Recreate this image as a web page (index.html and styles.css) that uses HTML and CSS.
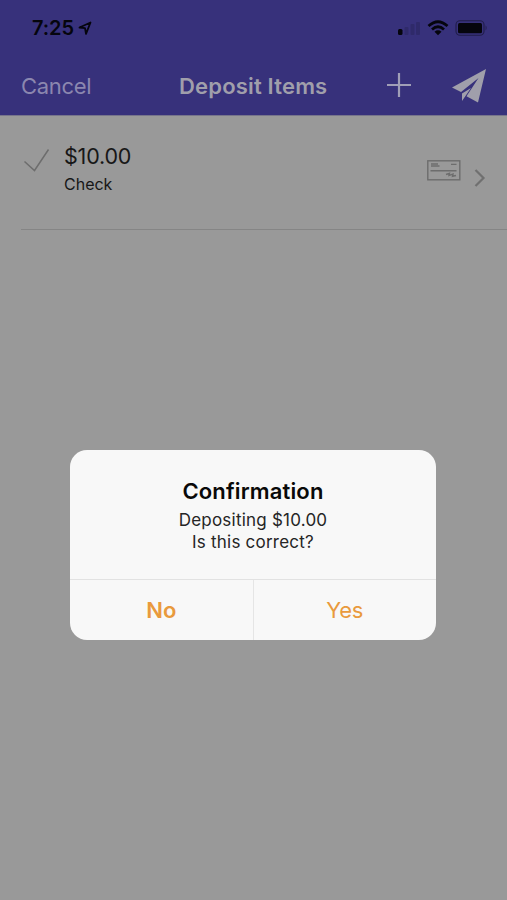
FILE: index.html
```html
<!DOCTYPE html>
<html lang="en">
<head>
<meta charset="utf-8">
<title>Deposit Items</title>
<link rel="stylesheet" href="styles.css">
</head>
<body>
<div class="screen">
  <header class="header">
    <div class="status">
      <span class="time">7:25</span>
      <svg class="location" width="14" height="15" viewBox="0 0 14 15"><path d="M1.5 6.5 12.5 1.5 8 12.8 7 7.2Z" fill="none" stroke="currentColor" stroke-width="1.8" stroke-linejoin="round"/></svg>
      <svg class="signal" width="24" height="16" viewBox="0 0 24 16"><rect x="1" y="9" width="4.5" height="6" rx="1.5"/><g opacity=".15"><rect x="7.5" y="7" width="4" height="8" rx="1"/><rect x="13.5" y="4" width="4" height="11" rx="1"/><rect x="19" y="2" width="4" height="13" rx="1"/></g></svg>
      <svg class="wifi" width="22" height="16" viewBox="0 0 22 16"><path d="M1.5 6Q11-2.5 20.5 6M5 9.5Q11 4 17 9.5" fill="none" stroke="currentColor" stroke-width="2.8"/><path d="M7.5 11.7Q11 8.8 14.5 11.7L11 15.2Z"/></svg>
      <svg class="battery" width="34" height="18" viewBox="0 0 34 18"><rect x="1" y="1.7" width="28" height="14.6" rx="4" fill="none" stroke="currentColor" stroke-width="1.1" opacity=".45"/><rect x="3" y="3.9" width="24" height="10.4" rx="1.5"/><path d="M30.5 6.3Q33 9 30.5 11.5Z" opacity=".35"/></svg>
    </div>
    <nav class="nav">
      <span class="cancel">Cancel</span>
      <h1 class="title">Deposit Items</h1>
      <svg class="plus" width="26" height="26" viewBox="0 0 26 26"><path d="M13 1V25M1 13H25" stroke="currentColor" stroke-width="2.2"/></svg>
      <svg class="send" width="36" height="36" viewBox="0 0 36 36"><path d="M35 1 1 19.5 10 24 27.5 10 15.5 28.3 27 34.5ZM11 25.5V33L20 20Z"/></svg>
    </nav>
  </header>
  <main class="list">
    <div class="item">
      <svg class="tick" width="28" height="26" viewBox="0 0 28 26"><path d="M1.5 13.5 11.5 22.5 25.5 1.5" fill="none" stroke="currentColor" stroke-width="1.5"/></svg>
      <div class="details"><div class="amount">$10.00</div><div class="kind">Check</div></div>
      <svg class="cheque" width="34" height="21" viewBox="0 0 34 21"><rect x=".8" y=".8" width="32" height="19" fill="none" stroke="currentColor" stroke-width="1.4"/><path d="M3.5 10.7H29.5M24 4.4H29.5M4 4H11M4 6H12.5" fill="none" stroke="currentColor" stroke-width="1.4"/><path d="M19 14.5 22.5 13.3 22 15.5 26 14 25.5 16.3 29 15.5" fill="none" stroke="currentColor" stroke-width="1.4"/></svg>
      <svg class="chevron" width="12" height="20" viewBox="0 0 12 20"><path d="M1.5 2 9.5 10 1.5 18" fill="none" stroke="currentColor" stroke-width="2.2"/></svg>
    </div>
  </main>
  <section class="dialog" role="alertdialog">
    <div class="message">
      <h2 class="heading">Confirmation</h2>
      <p class="line amount-line">Depositing $10.00</p>
      <p class="line">Is this correct?</p>
    </div>
    <div class="actions"><button class="action no">No</button><button class="action yes">Yes</button></div>
  </section>
</div>
</body>
</html>
```
FILE: styles.css
```css
* { box-sizing: border-box; }
body { margin: 0; font-family: Inter, "Liberation Sans", sans-serif; }
h1, h2, p { margin: 0; }
svg { display: block; flex: none; fill: currentColor; }
.screen { position: relative; width: 507px; height: 900px; background: #999; overflow: hidden; }
.header { height: 116px; background: #37317b; border-bottom: 1px solid #77758b; }
.status { display: flex; align-items: center; height: 56px; padding: 0 18px 0 32px; color: #05050d; }
.time { width: 42px; font-size: 20px; font-weight: 600; letter-spacing: -.1px; white-space: nowrap; }
.location { margin-left: 4px; }
.signal { margin-left: auto; }
.wifi { margin-left: 6px; }
.battery { margin-left: 6px; }
.nav { display: flex; align-items: center; height: 59px; padding: 0 20px 0 21px; color: #a09fab; }
.cancel { width: 158px; font-size: 22px; line-height: 28px; letter-spacing: -.3px; color: #8b87af; }
.title { width: 207px; font-size: 22px; line-height: 28px; font-weight: 600; letter-spacing: .18px; white-space: nowrap; }
.plus { margin-bottom: 2px; color: #a09fb7; }
.send { margin-left: auto; }
.item { display: flex; height: 114px; margin-left: 21px; padding-right: 21px; border-bottom: 1px solid #858585; }
.tick { margin: 32px 0 0 2px; color: #6d6d6d; }
.details { margin: 26px 0 0 13px; color: #171717; }
.amount { font-size: 21.5px; line-height: 28px; letter-spacing: -.2px; }
.kind { font-size: 16px; line-height: 28px; }
.cheque { margin: 44px 0 0 auto; color: #6d6d6d; }
.chevron { margin: 52px 0 0 13px; color: #707070; }
.dialog { position: absolute; left: 70px; top: 450px; width: 366px; height: 190px; display: flex; flex-direction: column; border-radius: 17px; background: #f8f8f8; overflow: hidden; text-align: center; }
.message { height: 129px; padding-top: 26px; }
.heading { font-size: 22px; line-height: 30px; font-weight: 600; letter-spacing: .15px; color: #090909; }
.line { font-size: 17px; line-height: 22px; letter-spacing: .22px; color: #252525; }
.amount-line { margin-top: 3px; }
.actions { display: flex; flex: 1; border-top: 1px solid #e2e2e2; }
.action { flex: 1; padding: 0; border: 0; background: none; font: 400 22px/60px Inter, "Liberation Sans", sans-serif; letter-spacing: -.2px; color: #e99a3d; }
.no { font-weight: 600; letter-spacing: 0; border-right: 1px solid #e5e5e5; }
```
